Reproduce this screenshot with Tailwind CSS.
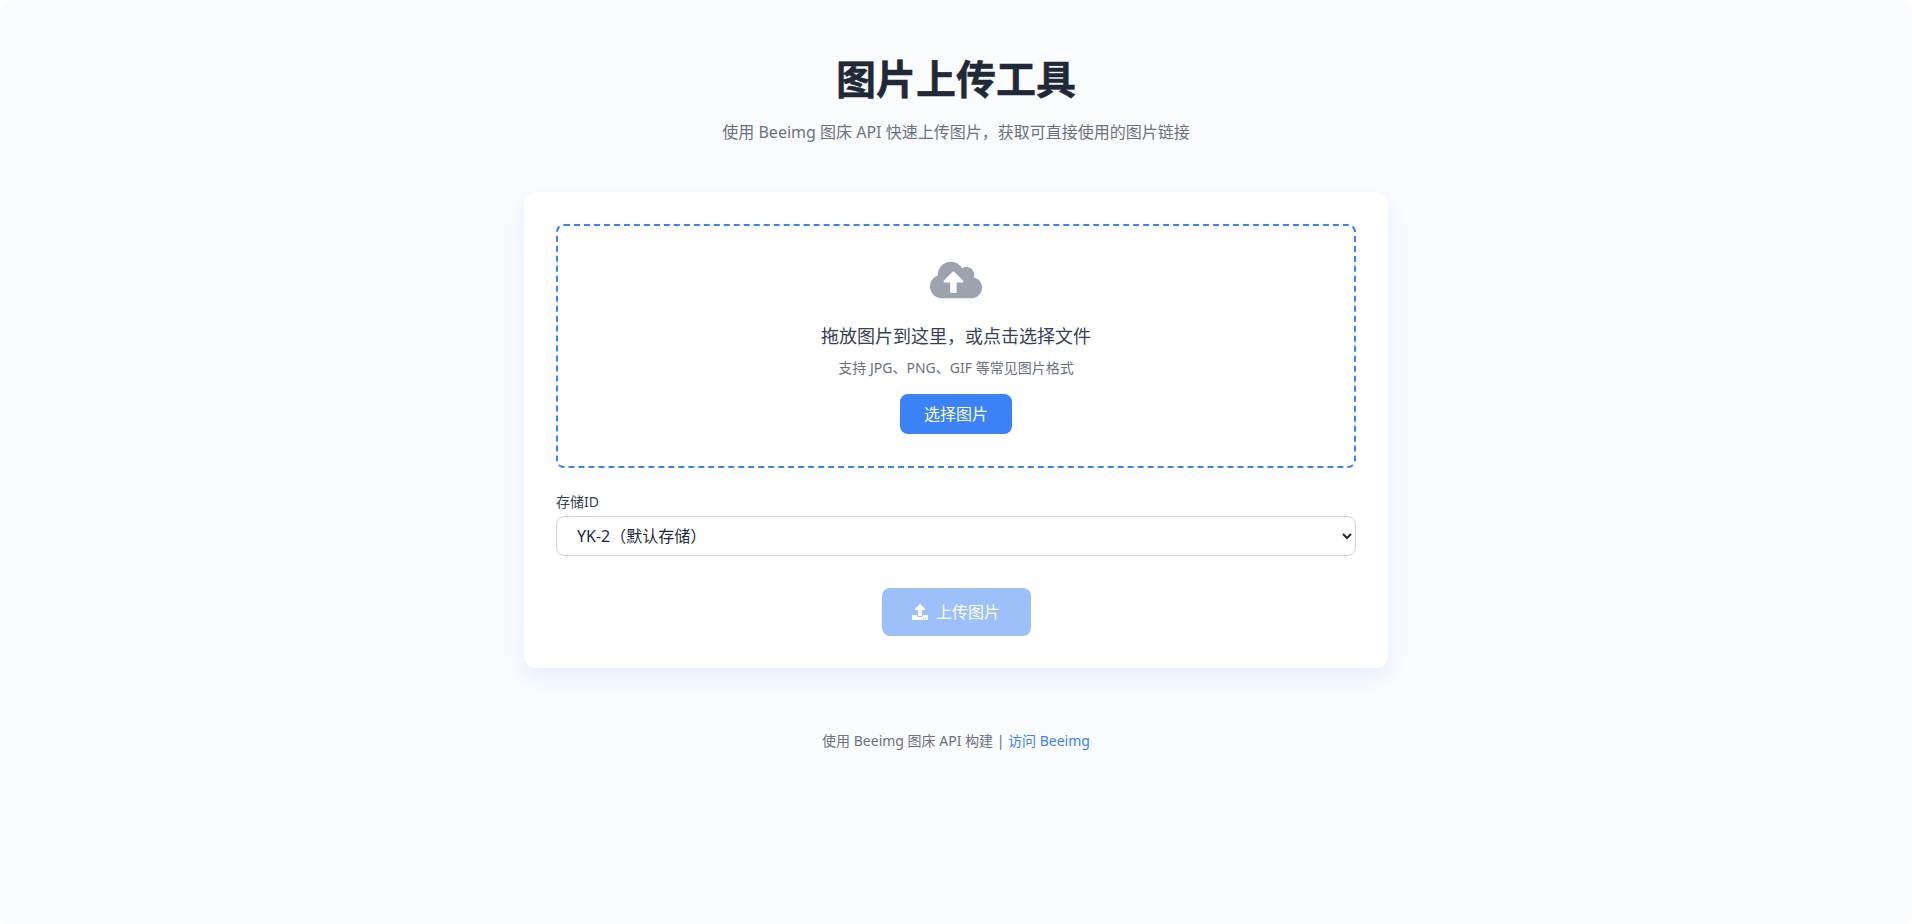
<!DOCTYPE html>
<html lang="zh-CN">
<head>
<meta charset="utf-8">
<title>图片上传工具</title>
<script src="https://cdn.jsdelivr.net/npm/@tailwindcss/browser@4"></script>
</head>
<body class="bg-white">
<div class="min-h-[924px] bg-[#fafbfd] rounded-[10px] font-['Noto_Sans','Noto_Sans_CJK_SC',sans-serif]">
  <div class="w-[896px] mx-auto px-4 pt-[49px]">
    <header class="text-center mb-[48px]">
      <h1 class="text-[40px] leading-[60px] font-bold text-[#1f2937] [-webkit-text-stroke:0.5px_#1f2937] mb-[11px]">图片上传工具</h1>
      <p class="text-base leading-6 text-[#6b7280]">使用 Beeimg 图床 API 快速上传图片，获取可直接使用的图片链接</p>
    </header>
    <main class="bg-white rounded-xl p-8 shadow-[0_10px_25px_rgba(59,130,246,0.1)]">
      <div class="h-[244px] border-2 border-dashed border-[#3b82f6] rounded-lg flex flex-col items-center pt-[33px]">
        <svg class="w-[52px] h-[42px] fill-[#9ca3af]" viewBox="0 0 640 512"><path d="M537.6 226.6c4.1-10.7 6.4-22.4 6.4-34.6 0-53-43-96-96-96-19.7 0-38.1 6-53.3 16.2C367 64.2 315.3 32 256 32c-88.4 0-160 71.6-160 160 0 2.7.1 5.4.2 8.1C40.2 219.8 0 273.2 0 336c0 79.5 64.5 144 144 144h368c70.7 0 128-57.3 128-128 0-61.9-44-113.6-102.4-125.4zM393.4 288H328v112c0 8.8-7.2 16-16 16h-48c-8.8 0-16-7.2-16-16V288h-65.4c-14.3 0-21.4-17.2-11.3-27.3l105.4-105.4c6.2-6.2 16.4-6.2 22.6 0l105.4 105.4c10.1 10.1 2.9 27.3-11.3 27.3z"/></svg>
        <p class="mt-[21px] text-lg leading-7 text-[#374151]">拖放图片到这里，或点击选择文件</p>
        <p class="mt-2 text-sm leading-5 text-[#6b7280]">支持 JPG、PNG、GIF 等常见图片格式</p>
        <button class="mt-4 w-[112px] h-10 rounded-lg bg-[#3b82f6] text-white text-base">选择图片</button>
      </div>
      <div class="mt-6">
        <label class="block text-sm leading-5 text-[#374151] mb-1">存储ID</label>
        <select class="block w-full h-10 px-4 bg-white border border-[#d1d5db] rounded-lg text-base text-[#1f2937]">
          <option>YK-2（默认存储）</option>
        </select>
      </div>
      <div class="mt-8 flex justify-center">
        <button class="flex items-center justify-center gap-2 w-[149px] h-12 rounded-lg bg-[#3b82f6]/50 text-white text-base">
          <svg class="w-4 h-4 fill-white" viewBox="0 0 512 512"><path d="M296 384h-80c-13.3 0-24-10.7-24-24V192h-87.7c-17.8 0-26.7-21.5-14.1-34.1L242.3 5.7c7.5-7.5 19.8-7.5 27.3 0l152.2 152.2c12.6 12.6 3.7 34.1-14.1 34.1H320v168c0 13.3-10.7 24-24 24zm216-8v112c0 13.3-10.7 24-24 24H24c-13.3 0-24-10.7-24-24V376c0-13.3 10.7-24 24-24h136v8c0 30.9 25.1 56 56 56h80c30.9 0 56-25.1 56-56v-8h136c13.3 0 24 10.7 24 24zm-124 88c0-11-9-20-20-20s-20 9-20 20 9 20 20 20 20-9 20-20zm64 0c0-11-9-20-20-20s-20 9-20 20 9 20 20 20 20-9 20-20z"/></svg>
          上传图片
        </button>
      </div>
    </main>
    <footer class="mt-[63px] text-center text-sm leading-5 text-[#6b7280]">使用 Beeimg 图床 API 构建 | <a class="text-[#3b82f6]">访问 Beeimg</a></footer>
  </div>
</div>
</body>
</html>
